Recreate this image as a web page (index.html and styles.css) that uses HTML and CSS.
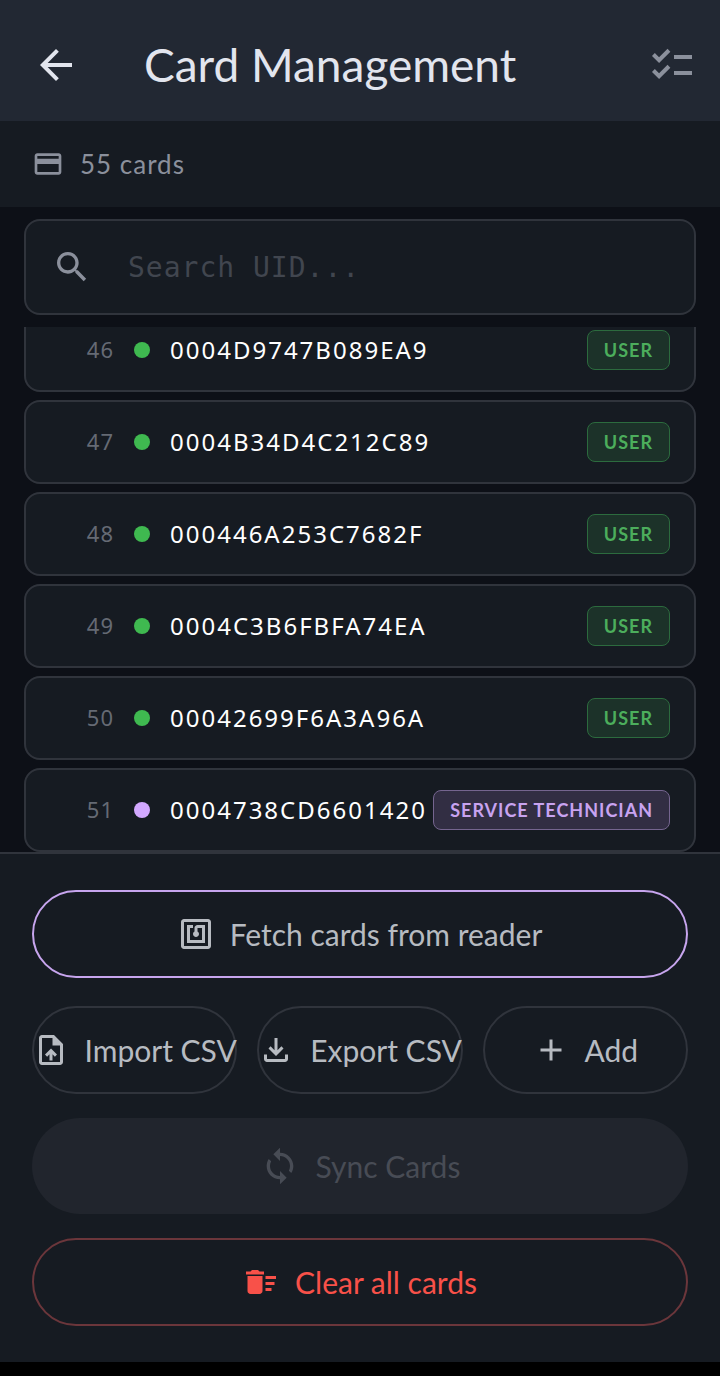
FILE: index.html
```html
<!DOCTYPE html>
<html lang="en">
<head>
  <meta charset="UTF-8">
  <meta name="viewport" content="width=device-width, initial-scale=1">
  <title>Card Management</title>
  <link rel="stylesheet" href="styles.css">
</head>
<body>
  <header class="app-bar">
    <button class="icon-btn" type="button" aria-label="Back">
      <svg class="icon icon-lg" viewBox="0 0 24 24"><path d="M20 11H7.83l5.59-5.59L12 4l-8 8 8 8 1.41-1.41L7.83 13H20v-2z"/></svg>
    </button>
    <h1>Card Management</h1>
    <button class="icon-btn muted" type="button" aria-label="Select cards">
      <svg class="icon icon-lg" viewBox="0 0 24 24"><path d="M22 7h-9v2h9V7zm0 8h-9v2h9v-2zM5.54 11L2 7.46l1.41-1.41 2.12 2.12 4.24-4.24 1.41 1.41L5.54 11zm0 8L2 15.46l1.41-1.41 2.12 2.12 4.24-4.24 1.41 1.41L5.54 19z"/></svg>
    </button>
  </header>

  <div class="count-bar">
    <svg class="icon icon-sm" viewBox="0 0 24 24"><path d="M20 4H4c-1.11 0-1.99.89-1.99 2L2 18c0 1.11.89 2 2 2h16c1.11 0 2-.89 2-2V6c0-1.11-.89-2-2-2zm0 14H4v-6h16v6zm0-10H4V6h16v2z"/></svg>
    <span>55 cards</span>
  </div>

  <main class="content">
    <label class="search">
      <svg class="icon icon-md" viewBox="0 0 24 24"><path d="M15.5 14h-.79l-.28-.27C15.41 12.59 16 11.11 16 9.5 16 5.91 13.09 3 9.5 3S3 5.91 3 9.5 5.91 16 9.5 16c1.61 0 3.09-.59 4.23-1.57l.27.28v.79l5 4.99L20.49 19l-4.99-5zm-6 0C7.01 14 5 11.99 5 9.5S7.01 5 9.5 5 14 7.01 14 9.5 11.99 14 9.5 14z"/></svg>
      <input type="text" placeholder="Search UID..." aria-label="Search UID">
    </label>

    <ul class="card-list">
      <li class="card"><span class="num">46</span><span class="dot"></span><span class="uid">0004D9747B089EA9</span><span class="badge">USER</span></li>
      <li class="card"><span class="num">47</span><span class="dot"></span><span class="uid">0004B34D4C212C89</span><span class="badge">USER</span></li>
      <li class="card"><span class="num">48</span><span class="dot"></span><span class="uid">000446A253C7682F</span><span class="badge">USER</span></li>
      <li class="card"><span class="num">49</span><span class="dot"></span><span class="uid">0004C3B6FBFA74EA</span><span class="badge">USER</span></li>
      <li class="card"><span class="num">50</span><span class="dot"></span><span class="uid">00042699F6A3A96A</span><span class="badge">USER</span></li>
      <li class="card technician"><span class="num">51</span><span class="dot"></span><span class="uid">0004738CD6601420</span><span class="badge">SERVICE TECHNICIAN</span></li>
    </ul>
  </main>

  <footer class="actions">
    <button class="btn btn-fetch" type="button">
      <svg class="icon" viewBox="0 0 24 24"><path d="M20 2H4c-1.1 0-2 .9-2 2v16c0 1.1.9 2 2 2h16c1.1 0 2-.9 2-2V4c0-1.1-.9-2-2-2zm0 18H4V4h16v16zM18 6h-5c-1.1 0-2 .9-2 2v2.28c-.6.35-1 .98-1 1.72 0 1.1.9 2 2 2s2-.9 2-2c0-.74-.4-1.38-1-1.72V8h3v8H8V8h2V6H6v12h12V6z"/></svg>
      <span>Fetch cards from reader</span>
    </button>
    <div class="btn-row">
      <button class="btn" type="button">
        <svg class="icon" viewBox="0 0 24 24"><path d="M14 2H6c-1.1 0-1.99.9-1.99 2L4 20c0 1.1.89 2 1.99 2H18c1.1 0 2-.9 2-2V8l-6-6zm4 18H6V4h7v5h5v11zM8 15.01l1.41 1.41L11 14.84V19h2v-4.16l1.59 1.59L16 15.01 12.01 11z"/></svg>
        <span>Import CSV</span>
      </button>
      <button class="btn" type="button">
        <svg class="icon" viewBox="0 0 24 24"><path d="M12 16l-5-5 1.4-1.45 2.6 2.6V4h2v8.15l2.6-2.6L17 11l-5 5zm-6 4c-1.1 0-2-.9-2-2v-3h2v3h12v-3h2v3c0 1.1-.9 2-2 2H6z"/></svg>
        <span>Export CSV</span>
      </button>
      <button class="btn" type="button">
        <svg class="icon" viewBox="0 0 24 24"><path d="M19 13h-6v6h-2v-6H5v-2h6V5h2v6h6v2z"/></svg>
        <span>Add</span>
      </button>
    </div>
    <button class="btn btn-sync" type="button" disabled>
      <svg class="icon icon-md" viewBox="0 0 24 24"><path d="M12 4V1L8 5l4 4V6c3.31 0 6 2.69 6 6 0 1.01-.25 1.97-.7 2.8l1.46 1.46C19.54 15.03 20 13.57 20 12c0-4.42-3.58-8-8-8zm0 14c-3.31 0-6-2.69-6-6 0-1.01.25-1.97.7-2.8L5.24 7.74C4.46 8.97 4 10.43 4 12c0 4.42 3.58 8 8 8v3l4-4-4-4v3z"/></svg>
      <span>Sync Cards</span>
    </button>
    <button class="btn btn-clear" type="button">
      <svg class="icon" viewBox="0 0 24 24"><path d="M15 16h4v2h-4zm0-8h7v2h-7zm0 4h6v2h-6zM3 18c0 1.1.9 2 2 2h6c1.1 0 2-.9 2-2V8H3v10zM14 5h-3l-1-1H6L5 5H2v2h12z"/></svg>
      <span>Clear all cards</span>
    </button>
  </footer>
</body>
</html>
```

FILE: styles.css
```css
:root {
  --bg: #0d1017;
  --panel: #161b22;
  --bar: #222833;
  --line: #30343c;
  --text: #e2e5ee;
  --muted: #8b909c;
  --green: #3fb950;
  --purple: #d2a8ff;
  --red: #f85149;
}

* {
  box-sizing: border-box;
}

body {
  margin: 0;
  height: 100vh;
  display: flex;
  flex-direction: column;
  background: var(--bg);
  color: var(--text);
  font-family: Lato, "Open Sans", sans-serif;
  border-bottom: 14px solid #000;
}

button {
  font: inherit;
  color: inherit;
  background: none;
  border: 0;
  padding: 0;
}

.icon {
  width: 36px;
  height: 36px;
  flex: none;
  display: block;
  fill: currentColor;
}

.icon-sm {
  width: 32px;
  height: 32px;
}

.icon-md {
  width: 40px;
  height: 40px;
}

.icon-lg {
  width: 48px;
  height: 48px;
}

/* top bar */
.app-bar {
  display: flex;
  align-items: center;
  gap: 64px;
  padding: 41px 24px 32px 32px;
  background: var(--bar);
}

.app-bar h1 {
  flex: 1;
  margin: 0;
  font-size: 46px;
  line-height: 48px;
  font-weight: 400;
}

.muted {
  color: var(--muted);
}

.count-bar {
  display: flex;
  align-items: center;
  gap: 16px;
  padding: 27px 32px;
  background: var(--panel);
  color: var(--muted);
  font-size: 26px;
  line-height: 32px;
  letter-spacing: 1px;
}

/* search + list */
.content {
  flex: 1;
  min-height: 0;
  display: flex;
  flex-direction: column;
  gap: 12px;
  padding: 12px 24px 0;
}

.search {
  display: flex;
  align-items: center;
  gap: 36px;
  height: 96px;
  flex: none;
  padding: 0 26px;
  background: var(--panel);
  border: 2px solid var(--line);
  border-radius: 16px;
  color: var(--muted);
}

.search input {
  flex: 1;
  min-width: 0;
  padding: 0;
  border: 0;
  outline: none;
  background: none;
  color: var(--text);
  font-family: "DejaVu Sans Mono", monospace;
  font-size: 28px;
  letter-spacing: 1px;
}

.search input::placeholder {
  color: #41464f;
  opacity: 1;
}

.card-list {
  flex: 1;
  min-height: 0;
  margin: 0;
  padding: 0;
  list-style: none;
  display: flex;
  flex-direction: column;
  justify-content: flex-end;
  gap: 8px;
  overflow: hidden;
}

.card {
  flex: none;
  display: flex;
  align-items: center;
  height: 84px;
  padding: 0 24px;
  background: var(--panel);
  border: 2px solid var(--line);
  border-radius: 16px;
  white-space: nowrap;
}

.num,
.uid {
  padding-bottom: 2px;
  font-family: "Noto Sans", sans-serif;
}

.num {
  flex: none;
  width: 64px;
  text-align: right;
  font-size: 22px;
  letter-spacing: 1px;
  color: #656a74;
}

.dot {
  flex: none;
  width: 16px;
  height: 16px;
  margin: 0 20px;
  border-radius: 50%;
  background: var(--green);
}

.uid {
  flex: 1;
  font-size: 24px;
  letter-spacing: 2px;
  color: #fff;
}

.badge {
  padding: 0 16px;
  border: 1px solid #2c6b3e;
  border-radius: 8px;
  background: #1c3229;
  color: #4cae5c;
  font-size: 18px;
  line-height: 38px;
  font-weight: 700;
  letter-spacing: 1px;
}

.technician .dot {
  background: var(--purple);
}

.technician .badge {
  border-color: #75658f;
  background: #322e43;
  color: #c8a3f0;
}

/* bottom actions */
.actions {
  flex: none;
  display: flex;
  flex-direction: column;
  gap: 24px;
  padding: 36px 32px;
  background: var(--panel);
  border-top: 2px solid var(--line);
}

.btn {
  display: flex;
  align-items: center;
  justify-content: center;
  gap: 16px;
  height: 88px;
  border: 2px solid var(--line);
  border-radius: 48px;
  color: #b7bbc1;
  font-size: 30px;
  font-weight: 400;
  white-space: nowrap;
}

.btn-row {
  display: grid;
  grid-template-columns: repeat(3, minmax(0, 1fr));
  gap: 20px;
}

.btn-fetch {
  margin-bottom: 4px;
  border-color: #c7a5ee;
}

.btn-sync {
  height: 96px;
  border: 0;
  background: #21252d;
  color: #484c55;
}

.btn-clear {
  border-color: #6b363b;
  color: var(--red);
}
```
